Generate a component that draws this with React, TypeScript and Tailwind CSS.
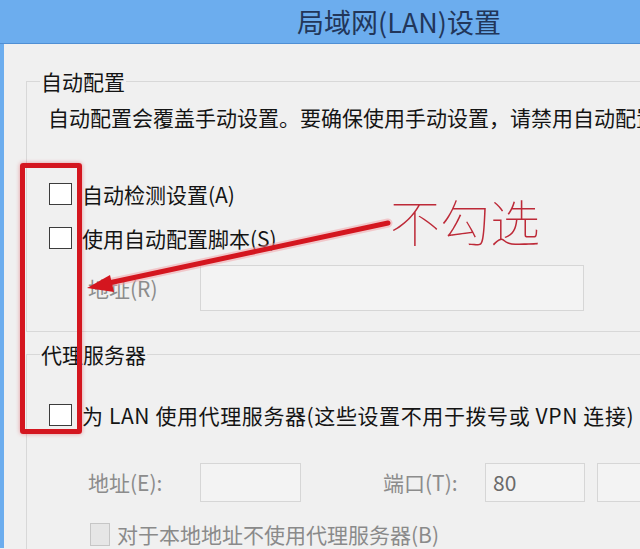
import React from "react";

function Box({ disabled }: { disabled?: boolean }) {
  return disabled ? (
    <span className="block w-[20px] h-[23px] border border-[#c6c6c6] bg-[#e6e6e6] shrink-0" />
  ) : (
    <span className="block w-[23px] h-[22px] border-[1.5px] border-[#3c3c3c] bg-white shrink-0" />
  );
}

export default function App() {
  return (
    <div className="relative w-[640px] h-[549px] overflow-hidden bg-[#f0f0f0] text-[#141414] font-['Noto_Sans_CJK_SC','Noto_Sans',sans-serif]">
      {/* title bar */}
      <div className="h-[44px] bg-[#6cadee] border-b border-[#4f8fd4] flex items-center pl-[297px]">
        <span className="text-[27px] leading-none text-[#22365a] whitespace-nowrap">局域网(LAN)设置</span>
      </div>

      <div className="flex h-[504px]">
        <div className="w-[4px] bg-[#6cadee] shrink-0" />
        <div className="flex-1 flex flex-col">
          {/* group 1 */}
          <fieldset className="mt-[27px] ml-[22px] w-[660px] border border-[#d8d8d8] pb-[20px]">
            <legend className="ml-[13px] px-[1px] text-[21px] leading-[21px] whitespace-nowrap">自动配置</legend>
            <div className="pl-[21px] flex flex-col">
              <div className="mt-[15px] text-[21px] leading-[21px] whitespace-nowrap">
                自动配置会覆盖手动设置。要确保使用手动设置，请禁用自动配置。
              </div>
              <div className="mt-[55px] ml-[1px] flex items-center gap-[10px]">
                <Box />
                <span className="text-[21px] leading-[21px] whitespace-nowrap">自动检测设置(A)</span>
              </div>
              <div className="mt-[22px] ml-[1px] flex items-center gap-[10px]">
                <Box />
                <span className="text-[21px] leading-[21px] whitespace-nowrap">使用自动配置脚本(S)</span>
              </div>
              <div className="mt-[16px] flex items-center">
                <span className="ml-[40px] w-[112px] text-[21px] leading-[21px] text-[#8c8c8c] whitespace-nowrap">地址(R)</span>
                <div className="w-[384px] h-[46px] border border-[#d6d6d6] bg-[#f3f3f3]" />
              </div>
            </div>
          </fieldset>

          {/* group 2 */}
          <fieldset className="mt-[12px] ml-[22px] w-[660px] border border-[#d8d8d8] pb-[40px]">
            <legend className="ml-[13px] px-[1px] text-[21px] leading-[21px] whitespace-nowrap">代理服务器</legend>
            <div className="pl-[21px] flex flex-col">
              <div className="mt-[39px] ml-[1px] flex items-center gap-[10px]">
                <Box />
                <span className="text-[21px] leading-[21px] tracking-[0.6px] whitespace-nowrap">
                  为 LAN 使用代理服务器(这些设置不用于拨号或 VPN 连接)
                </span>
              </div>
              <div className="mt-[37px] flex items-center">
                <span className="ml-[40px] w-[112px] text-[21px] leading-[21px] text-[#8c8c8c] whitespace-nowrap">地址(E):</span>
                <div className="w-[101px] h-[39px] border border-[#d6d6d6] bg-[#f3f3f3]" />
                <span className="ml-[82px] w-[102px] text-[21px] leading-[21px] text-[#8c8c8c] whitespace-nowrap">端口(T):</span>
                <div className="w-[100px] h-[39px] border border-[#d6d6d6] bg-[#f3f3f3] flex items-center pl-[7px] text-[21px] text-[#6a6a6a]">
                  80
                </div>
                <div className="ml-[12px] w-[100px] h-[39px] border border-[#d6d6d6] bg-[#f3f3f3]" />
              </div>
              <div className="mt-[21px] ml-[42px] flex items-center gap-[7px]">
                <Box disabled />
                <span className="text-[21px] leading-[21px] text-[#8a8a8a] whitespace-nowrap">对于本地地址不使用代理服务器(B)</span>
              </div>
            </div>
          </fieldset>
        </div>
      </div>

      {/* annotation overlay */}
      <div className="absolute left-[20px] top-[163px] w-[62px] h-[271px] border-[5px] border-[#d4161f] rounded-[3px] shadow-[0_0_4px_rgba(220,40,50,0.45)] pointer-events-none" />
      <svg className="absolute left-0 top-0 pointer-events-none" width="640" height="549" viewBox="0 0 640 549">
        <line x1="388" y1="223" x2="104" y2="284" stroke="#f2a0a6" strokeWidth="9" strokeLinecap="round" opacity="0.5" />
        <line x1="388" y1="223" x2="104" y2="284" stroke="#d4161f" strokeWidth="5" strokeLinecap="round" />
        <polygon points="87,288 110,275 114,292" fill="#d4161f" />
      </svg>
      <div className="absolute left-[390px] top-[195px] text-[50px] leading-none font-thin text-[#bd2a38] whitespace-nowrap pointer-events-none">
        不勾选
      </div>
    </div>
  );
}
